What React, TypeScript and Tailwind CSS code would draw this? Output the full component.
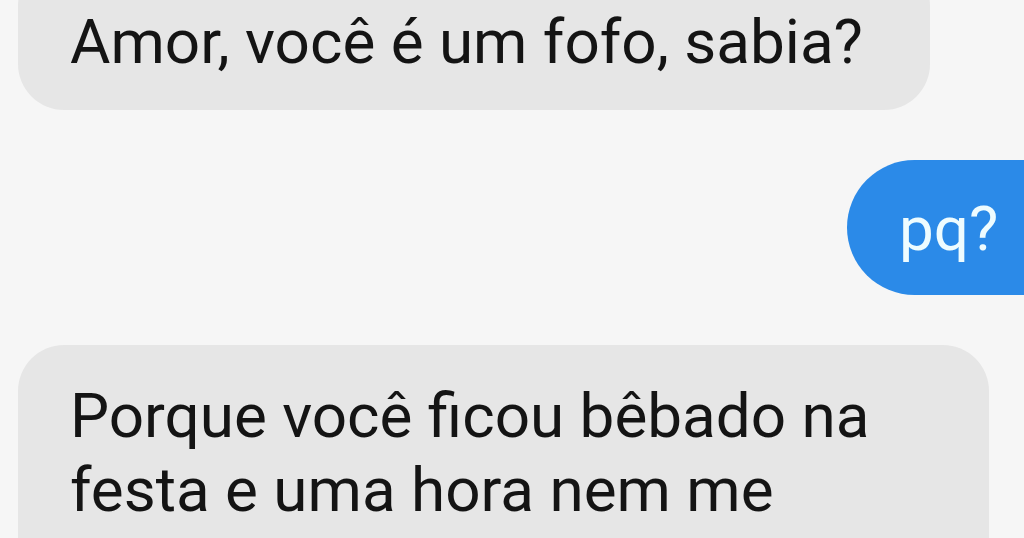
export default function App() {
  return (
    <div className="flex h-[538px] w-[1024px] flex-col overflow-hidden bg-[#f6f6f6] pl-[18px] font-['Roboto',sans-serif] text-[62px] leading-[74px] text-[#141414]">
      <div className="-mt-[40px] h-[150px] w-[912px] shrink-0 rounded-[46px] bg-[#e6e6e6] pl-[52px] pt-[45px]">
        Amor, você é um fofo, sabia?
      </div>
      <div className="-mr-[26px] mt-[50px] h-[135px] w-[203px] shrink-0 self-end rounded-l-[68px] bg-[#2b8ae8] pl-[52px] pt-[32px] text-[#eefcff]">
        pq?
      </div>
      <div className="mt-[50px] h-[260px] w-[971px] shrink-0 rounded-[46px] bg-[#e6e6e6] pl-[52px] pt-[34px]">
        <span className="block">Porque você ficou bêbado na</span>
        <span className="block">festa e uma hora nem me</span>
      </div>
    </div>
  )
}
